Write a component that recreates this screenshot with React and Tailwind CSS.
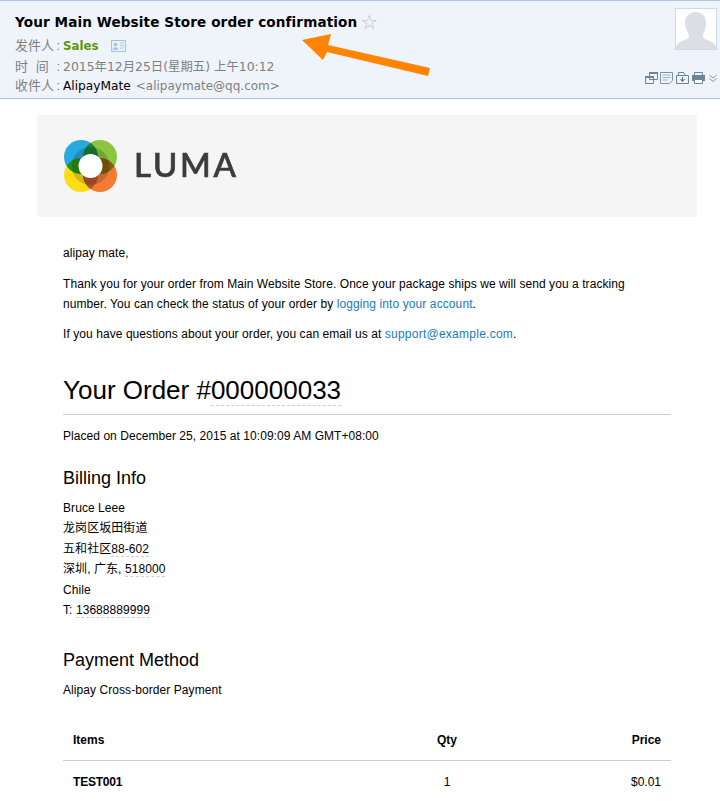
const CJK = '"Liberation Sans","Noto Sans CJK SC",sans-serif';
const META = '"DejaVu Sans","Noto Sans CJK SC",sans-serif';

function Dashed({ children }) {
  return <span className="border-b border-dashed border-[#cccccc]">{children}</span>;
}

function Logo() {
  return (
    <svg width="174" height="54" viewBox="0 0 174 54" className="block isolate">
      <defs>
        <clipPath id="lumaYellow"><circle cx="17" cy="36" r="17" /></clipPath>
      </defs>
      <circle cx="17" cy="18" r="17" fill="#29a9e0" className="mix-blend-multiply" />
      <circle cx="36" cy="18" r="17" fill="#8cc63f" className="mix-blend-multiply" />
      <circle cx="17" cy="36" r="17" fill="#ffdd15" className="mix-blend-multiply" />
      <circle cx="36" cy="36" r="17" fill="#f47b32" className="mix-blend-multiply" />
      <circle cx="36" cy="36" r="17" fill="#b4562a" clipPath="url(#lumaYellow)" />
      <circle cx="26.5" cy="27" r="19" fill="#d4d4d4" className="mix-blend-multiply" />
      <circle cx="26.5" cy="27" r="12" fill="#ffffff" />
      <text x="70" y="38" fontFamily='"Lato","Liberation Sans",sans-serif' fontSize="33" fontWeight="500" letterSpacing="2.7" fill="#3c3c3c" stroke="#3c3c3c" strokeWidth="0.7">LUMA</text>
    </svg>
  );
}

function Toolbar() {
  return (
    <div className="flex items-center gap-[3px]">
      <svg width="13" height="12" viewBox="0 0 13 12" className="-mr-[1px]"><path d="M4.5 .5h8v7h-8z M.5 4.5h8v7h-8z" fill="#eef3fb" stroke="#6f8496" /><path d="M4 0h9v2h-9z M0 4h9v2h-9z" fill="#6f8496" /></svg>
      <svg width="13" height="12" viewBox="0 0 13 12"><path d="M.5 .5h12v8l-3 3h-9z" fill="#eef3fb" stroke="#7e93a5" /><path d="M2.5 3h8M2.5 5.5h8M2.5 8h5" stroke="#a5b4c2" /></svg>
      <svg width="13" height="12" viewBox="0 0 13 12"><path d="M.5 3.5h12v8h-12z" fill="#eef3fb" stroke="#6f8496" /><path d="M2.5 3V.5h5L9 3" fill="none" stroke="#6f8496" /><path d="M6.5 5v4M4.5 7l2 2.5 2-2.5" fill="none" stroke="#55697a" /></svg>
      <svg width="13" height="12" viewBox="0 0 13 12"><path d="M2.5 .5h8v3h-8z" fill="#eef3fb" stroke="#6f8496" /><path d="M0 3h13v6h-13z" fill="#6f8496" /><path d="M2.5 7.5h8v4h-8z" fill="#ffffff" stroke="#6f8496" /></svg>
      <svg width="8" height="9" viewBox="0 0 8 9" className="ml-[1px]"><path d="M.5 1l3.5 3 3.5-3M.5 4.5l3.5 3 3.5-3" fill="none" stroke="#8a98a5" /></svg>
    </div>
  );
}

function Avatar() {
  return (
    <div className="w-[42px] h-[42px] border border-[#c9dcef] bg-white overflow-hidden">
      <svg width="40" height="40" viewBox="0 0 40 40" className="block">
        <path d="M20 3c6 0 10 4 10 11 0 6-3 10-3 13 0 3 5 4 9 6 2 1 4 3 4 7H0c0-4 2-6 4-7 4-2 9-3 9-6 0-3-4-7-4-13 0-7 5-11 11-11z" fill="#dcdee3" />
      </svg>
    </div>
  );
}

function Label({ children }) {
  return <span className="inline-flex justify-between w-[48px] shrink-0 text-[13px] text-[#808080]" style={{ fontFamily: CJK }}>{children}</span>;
}

export default function App() {
  return (
    <div className="relative w-[720px] h-[801px] overflow-hidden bg-white text-[12px] leading-[20px] text-black tracking-[0.07px]" style={{ fontFamily: CJK }}>
      <header className="h-[99px] bg-[#eff4fb] border-y border-[#a9c5e2] flex justify-between pl-[15px] pr-[3px] tracking-normal">
        <div>
          <div className="flex items-center h-[18px] mt-[12px]">
            <h1 className="text-[14px] leading-[18px] font-bold tracking-[0.1px] text-black" style={{ fontFamily: META, fontSize: 13.6 }}>Your Main Website Store order confirmation</h1>
            <span className="ml-[3px] text-[#b9bcc0] text-[20px] leading-[18px]" style={{ fontFamily: '"DejaVu Sans",sans-serif' }}>☆</span>
          </div>
          <div className="flex items-center h-[20px] mt-[5px]">
            <Label><span>发件人</span><span className="mr-[3px]">:</span></Label>
            <b className="text-[#5b9a05]" style={{ fontFamily: META, fontSize: 11.8 }}>Sales</b>
            <svg width="15" height="12" viewBox="0 0 15 12" className="ml-[12px]">
              <path d="M.5.5h14v11H.5z" fill="#eaf1fa" stroke="#a9c0da" />
              <circle cx="4.5" cy="4.5" r="1.8" fill="#a9c0da" />
              <path d="M2 9.5c0-2.5 5-2.5 5 0zM9 3h4M9 5.5h4M9 8h4" fill="#a9c0da" stroke="#a9c0da" strokeWidth=".8" />
            </svg>
          </div>
          <div className="flex items-center h-[20px] mt-[1px] text-[#808080]" style={{ fontFamily: META, fontSize: 12.4 }}>
            <Label><span>时</span><span>间</span><span className="mr-[3px]">:</span></Label>
            <span>2015年12月25日(星期五) 上午10:12</span>
          </div>
          <div className="flex items-center h-[20px] -mt-[1px] text-[#808080]" style={{ fontFamily: META, fontSize: 12 }}>
            <Label><span>收件人</span><span className="mr-[3px]">:</span></Label>
            <span className="text-black text-[12.2px]">AlipayMate</span>
            <span className="ml-[5px]">&lt;alipaymate@qq.com&gt;</span>
          </div>
        </div>
        <div className="flex flex-col items-end">
          <div className="mt-[7px]"><Avatar /></div>
          <div className="mt-[22px]"><Toolbar /></div>
        </div>
      </header>

      <svg width="135" height="50" viewBox="0 0 135 50" className="absolute left-[300px] top-[32px]">
        <path d="M2 8 L31 2 L28 13 L130 36 L128 44 L27 20 L23 28z" fill="#ff8400" />
      </svg>

      <main className="mx-[37px] mt-[16px] w-[660px]">
        <div className="h-[102px] bg-[#f5f5f5] pl-[27px] pt-[24px]"><Logo /></div>

        <div className="px-[26px]">
          <p className="mt-[26px]">alipay mate,</p>
          <p className="mt-[11px] max-w-[580px]">
            Thank you for your order from Main Website Store. Once your package ships we will send you a tracking number. You can check the status of your order by <span className="text-[#1979c3] tracking-[0.1px]">logging into your account</span>.
          </p>
          <p className="mt-[10px]">
            If you have questions about your order, you can email us at <span className="text-[#1979c3] tracking-[0.25px]">support@example.com</span>.
          </p>

          <div className="mt-[30px] pb-[7px] border-b border-[#cccccc]">
            <h2 className="text-[26px] leading-[33px] font-normal tracking-normal">Your Order #<Dashed>000000033</Dashed></h2>
          </div>
          <p className="mt-[11px] tracking-[0.05px]">Placed on December 25, 2015 at 10:09:09 AM GMT+08:00</p>

          <h3 className="mt-[20px] text-[18px] leading-[24px] font-normal tracking-normal">Billing Info</h3>
          <div className="mt-[8px] leading-[20.4px]">
            <div>Bruce Leee</div>
            <div>龙岗区坂田街道</div>
            <div>五和社区<Dashed>88-602</Dashed></div>
            <div>深圳, 广东, <Dashed>518000</Dashed></div>
            <div>Chile</div>
            <div>T: <Dashed>13688889999</Dashed></div>
          </div>

          <h3 className="mt-[28px] text-[18px] leading-[24px] font-normal tracking-normal">Payment Method</h3>
          <p className="mt-[8px]">Alipay Cross-border Payment</p>

          <div className="mt-[20px]">
            <div className="flex items-center h-[41px] px-[10px] border-b border-[#cccccc] font-bold tracking-normal">
              <span className="flex-1">Items</span>
              <span className="w-[50px] text-center">Qty</span>
              <span className="w-[189px] text-right">Price</span>
            </div>
            <div className="flex items-center h-[42px] px-[10px] tracking-normal">
              <b className="flex-1 tracking-[-0.2px]">TEST001</b>
              <span className="w-[50px] text-center">1</span>
              <span className="w-[189px] text-right">$0.01</span>
            </div>
          </div>
        </div>
      </main>
    </div>
  );
}
